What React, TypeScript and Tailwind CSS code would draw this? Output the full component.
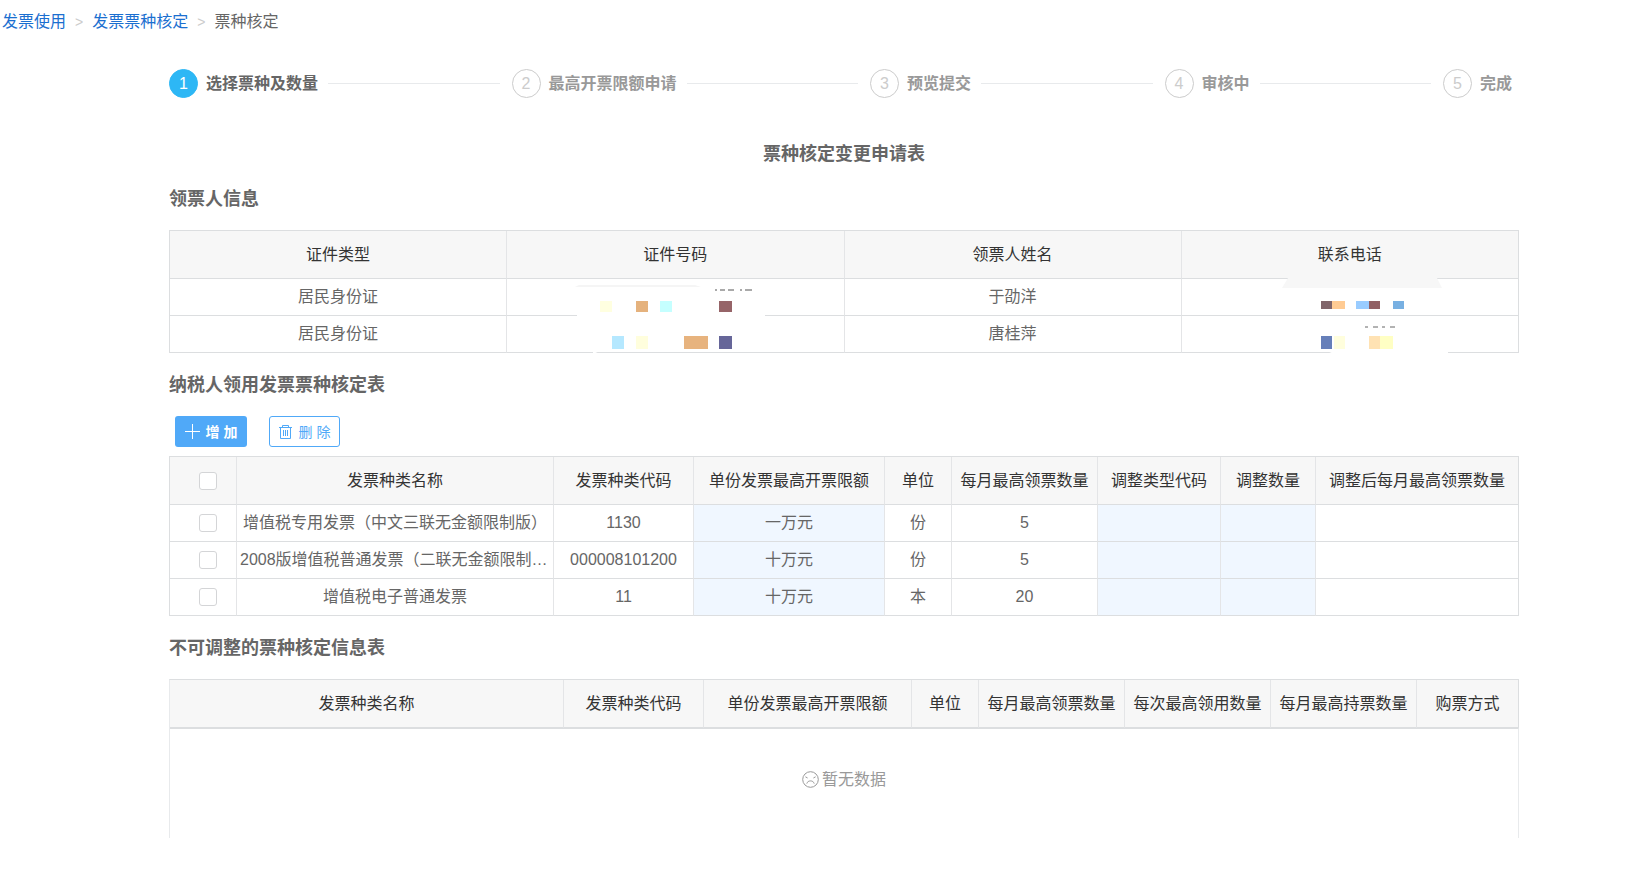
import { useState } from "react";
import clsx from "clsx";

const steps = ["选择票种及数量", "最高开票限额申请", "预览提交", "审核中", "完成"];

const invoices = [
  {
    name: "增值税专用发票（中文三联无金额限制版）",
    code: "1130",
    limit: "一万元",
    unit: "份",
    max: 5,
  },
  {
    name: "2008版增值税普通发票（二联无金额限制版）",
    code: "000008101200",
    limit: "十万元",
    unit: "份",
    max: 5,
  },
  {
    name: "增值税电子普通发票",
    code: "11",
    limit: "十万元",
    unit: "本",
    max: 20,
  },
];

const fixedColumns = [
  { title: "发票种类名称", width: "w-[394px]" },
  { title: "发票种类代码", width: "w-[140px]" },
  { title: "单份发票最高开票限额", width: "w-[208px]" },
  { title: "单位", width: "w-[67px]" },
  { title: "每月最高领票数量", width: "w-[146px]" },
  { title: "每次最高领用数量", width: "w-[146px]" },
  { title: "每月最高持票数量", width: "w-[146px]" },
  { title: "购票方式", width: "w-[102px]" },
];

const tableClass =
  "w-full table-fixed border-separate border-spacing-0 border-l border-t border-[#dcdee0] text-center";
const thClass =
  "h-12 border-b border-r border-b-[#dcdee0] border-r-[#e4e5e7] bg-[#f7f7f7] p-0 font-normal text-[#333] last:border-r-[#dcdee0]";
const tdClass =
  "h-[37px] border-b border-r border-b-[#dcdee0] border-r-[#e4e5e7] p-0 last:border-r-[#dcdee0]";
const checkboxClass =
  "block h-[18px] w-[18px] appearance-none rounded-[3px] border border-[#d4d5d7] bg-white checked:border-[#50a9f8] checked:bg-[#50a9f8]";

function Breadcrumb() {
  return (
    <nav className="flex items-center gap-[9px] pl-0.5 pt-2.5 leading-6">
      <a href="#" className="text-[#1b6fd0]">
        发票使用
      </a>
      <span className="text-sm leading-6 text-[#ccc]">&gt;</span>
      <a href="#" className="text-[#1b6fd0]">
        发票票种核定
      </a>
      <span className="text-sm leading-6 text-[#ccc]">&gt;</span>
      <span>票种核定</span>
    </nav>
  );
}

function Steps({ current }: { current: number }) {
  return (
    <ol className="mt-[35px] flex items-center pr-[7px]">
      {steps.map((label, i) => (
        <li
          key={label}
          className={clsx(
            "flex items-center",
            i < steps.length - 1 && "flex-auto"
          )}
        >
          <span
            className={clsx(
              "flex h-[29px] w-[29px] items-center justify-center rounded-full border",
              i === current
                ? "border-[#2db7f5] bg-[#2db7f5] text-white"
                : "border-[#ccc] text-[#ccc]"
            )}
          >
            {i + 1}
          </span>
          <span
            className={clsx(
              "ml-2 whitespace-nowrap font-bold",
              i === current ? "text-[#666]" : "text-[#999]"
            )}
          >
            {label}
          </span>
          {i < steps.length - 1 && (
            <span className="ml-2.5 mr-3 h-px flex-1 bg-[#e8eaec]" />
          )}
        </li>
      ))}
    </ol>
  );
}

function SectionTitle({ children }: { children: React.ReactNode }) {
  return (
    <h2 className="mb-[17px] mt-[18px] text-lg font-bold leading-7">
      {children}
    </h2>
  );
}

// mosaic over the id numbers, spans both rows
function IdMask() {
  return (
    <svg
      className="absolute -top-px left-1/2 -translate-x-1/2"
      width="200"
      height="76"
      viewBox="0 0 200 76"
      aria-hidden="true"
    >
      <path d="M2 8H190V56H187V73H25L18 76V60L2 56Z" fill="#fff" />
      <path d="M0 9L4 7H120L126 9Z" fill="#f5f5f5" />
      <path d="M140 12h2M145 12h5M153 12h6M165 12h2M170 12h7" stroke="#555" />
      <rect x="25" y="23" width="12" height="11" fill="#ffffe0" />
      <rect x="61" y="23" width="12" height="11" fill="#e5b27d" />
      <rect x="85" y="23" width="12" height="11" fill="#c5ffff" />
      <rect x="144" y="23" width="13" height="11" fill="#966468" />
      <rect x="37" y="58" width="12" height="13" fill="#b5e8ff" />
      <rect x="61" y="58" width="12" height="13" fill="#fffedd" />
      <rect x="109" y="58" width="24" height="13" fill="#e7b37e" />
      <rect x="144" y="58" width="13" height="13" fill="#666699" />
      <path d="M25 74.5H190" stroke="#dcdee0" />
    </svg>
  );
}

// mosaic over the phone numbers, spans both rows
function PhoneMask() {
  return (
    <svg
      className="absolute -top-px left-1/2 -translate-x-1/2"
      width="200"
      height="76"
      viewBox="0 0 200 76"
      aria-hidden="true"
    >
      <path d="M38 0H187L192 10H32Z" fill="#f7f7f7" />
      <path d="M84 73H198V76H77Z" fill="#fff" />
      <path d="M115 49h3M123 49h5M132 49h3M140 49h5" stroke="#666" />
      <rect x="71" y="23" width="11" height="8" fill="#80656a" />
      <rect x="82" y="23" width="13" height="8" fill="#ffcb93" />
      <rect x="106" y="23" width="13" height="8" fill="#99ccff" />
      <rect x="119" y="23" width="11" height="8" fill="#916064" />
      <rect x="143" y="23" width="11" height="8" fill="#78b0e2" />
      <rect x="71" y="58" width="11" height="13" fill="#667fb9" />
      <rect x="84" y="58" width="11" height="13" fill="#fffedd" />
      <rect x="119" y="58" width="11" height="13" fill="#ffe2b3" />
      <rect x="130" y="58" width="13" height="13" fill="#ffffc4" />
    </svg>
  );
}

function HolderTable() {
  return (
    <table className={tableClass}>
      <thead>
        <tr>
          <th className={thClass}>证件类型</th>
          <th className={thClass}>证件号码</th>
          <th className={thClass}>领票人姓名</th>
          <th className={thClass}>联系电话</th>
        </tr>
      </thead>
      <tbody>
        <tr>
          <td className={tdClass}>居民身份证</td>
          <td className={clsx(tdClass, "relative")}>
            <IdMask />
          </td>
          <td className={tdClass}>于劭洋</td>
          <td className={clsx(tdClass, "relative")}>
            <PhoneMask />
          </td>
        </tr>
        <tr>
          <td className={tdClass}>居民身份证</td>
          <td className={tdClass}></td>
          <td className={tdClass}>唐桂萍</td>
          <td className={tdClass}></td>
        </tr>
      </tbody>
    </table>
  );
}

function InvoiceTable() {
  const [selected, setSelected] = useState<string[]>([]);

  const toggle = (code: string) => {
    setSelected((prev) =>
      prev.includes(code) ? prev.filter((c) => c !== code) : [...prev, code]
    );
  };

  const toggleAll = () => {
    setSelected(
      selected.length === invoices.length ? [] : invoices.map((i) => i.code)
    );
  };

  return (
    <table className={tableClass}>
      <thead>
        <tr>
          <th className={clsx(thClass, "w-[67px]")}>
            <div className="flex justify-center pl-2.5">
              <input
                type="checkbox"
                aria-label="全选"
                className={checkboxClass}
                checked={selected.length === invoices.length}
                onChange={toggleAll}
              />
            </div>
          </th>
          <th className={clsx(thClass, "w-[317px]")}>发票种类名称</th>
          <th className={clsx(thClass, "w-[140px]")}>发票种类代码</th>
          <th className={clsx(thClass, "w-[191px]")}>单份发票最高开票限额</th>
          <th className={clsx(thClass, "w-[67px]")}>单位</th>
          <th className={clsx(thClass, "w-[146px]")}>每月最高领票数量</th>
          <th className={clsx(thClass, "w-[123px]")}>调整类型代码</th>
          <th className={clsx(thClass, "w-[95px]")}>调整数量</th>
          <th className={clsx(thClass, "w-[203px]")}>调整后每月最高领票数量</th>
        </tr>
      </thead>
      <tbody>
        {invoices.map((item) => (
          <tr key={item.code}>
            <td className={tdClass}>
              <div className="flex justify-center pl-2.5">
                <input
                  type="checkbox"
                  aria-label={item.name}
                  className={checkboxClass}
                  checked={selected.includes(item.code)}
                  onChange={() => toggle(item.code)}
                />
              </div>
            </td>
            <td className={tdClass}>
              <div className="truncate px-[3px]" title={item.name}>
                {item.name}
              </div>
            </td>
            <td className={tdClass}>{item.code}</td>
            <td className={clsx(tdClass, "bg-[#f0f7ff]")}>{item.limit}</td>
            <td className={tdClass}>{item.unit}</td>
            <td className={tdClass}>{item.max}</td>
            <td className={clsx(tdClass, "bg-[#f0f7ff]")}></td>
            <td className={clsx(tdClass, "bg-[#f0f7ff]")}></td>
            <td className={tdClass}></td>
          </tr>
        ))}
      </tbody>
    </table>
  );
}

function FixedTable() {
  return (
    <table className={clsx(tableClass, "border-l-[#e8eaec]")}>
      <thead>
        <tr>
          {fixedColumns.map((col) => (
            <th key={col.title} className={clsx(thClass, col.width)}>
              {col.title}
            </th>
          ))}
        </tr>
      </thead>
      <tbody>
        <tr>
          <td
            colSpan={fixedColumns.length}
            className="h-[110px] border-r border-t border-r-[#e8eaec] border-t-[#dcdee0] p-0 pb-2 text-[#999]"
          >
            <div className="flex items-center justify-center gap-[3px]">
              <svg
                width="17"
                height="17"
                viewBox="0 0 17 17"
                fill="none"
                stroke="currentColor"
                aria-hidden="true"
              >
                <circle cx="8.5" cy="8.5" r="7.8" />
                <path d="M3.4 5.8l2.2 1.2M13.6 5.8l-2.2 1.2" />
                <path d="M4.8 12.6c.8-3.6 6.6-3.6 7.4 0" />
              </svg>
              暂无数据
            </div>
          </td>
        </tr>
      </tbody>
    </table>
  );
}

export default function App() {
  return (
    <div className="min-h-screen bg-white font-['Liberation_Sans','Noto_Sans_CJK_SC',sans-serif] text-base text-[#666]">
      <Breadcrumb />

      <main className="pb-[34px] pl-[169px] pr-[123px]">
        <Steps current={0} />

        <h1 className="mt-[43px] text-center text-lg font-bold leading-[26px]">
          票种核定变更申请表
        </h1>

        <SectionTitle>领票人信息</SectionTitle>
        <HolderTable />

        <SectionTitle>纳税人领用发票票种核定表</SectionTitle>
        <div className="mb-[9px] flex gap-[22px] pl-1.5 text-sm">
          <button
            type="button"
            className="flex h-[31px] w-[72px] items-center justify-center gap-1.5 rounded-[3px] bg-[#50a9f8] font-bold text-white"
          >
            <svg
              width="15"
              height="15"
              viewBox="0 0 15 15"
              stroke="currentColor"
              aria-hidden="true"
            >
              <path d="M7.5 0v15M0 7.5h15" />
            </svg>
            增 加
          </button>
          <button
            type="button"
            className="flex h-[31px] w-[71px] items-center justify-center gap-[7px] rounded-[3px] border border-[#50a9f8] bg-white text-[#50a9f8]"
          >
            <svg
              width="13"
              height="14"
              viewBox="0 0 13 14"
              fill="none"
              stroke="currentColor"
              aria-hidden="true"
            >
              <path d="M0 2.5h13M3.5 2.5v-2h6v2M1.5 2.5v11h10v-11M4.5 5v6M6.5 5v6M8.5 5v6" />
            </svg>
            删 除
          </button>
        </div>
        <InvoiceTable />

        <SectionTitle>不可调整的票种核定信息表</SectionTitle>
        <FixedTable />
      </main>
    </div>
  );
}
